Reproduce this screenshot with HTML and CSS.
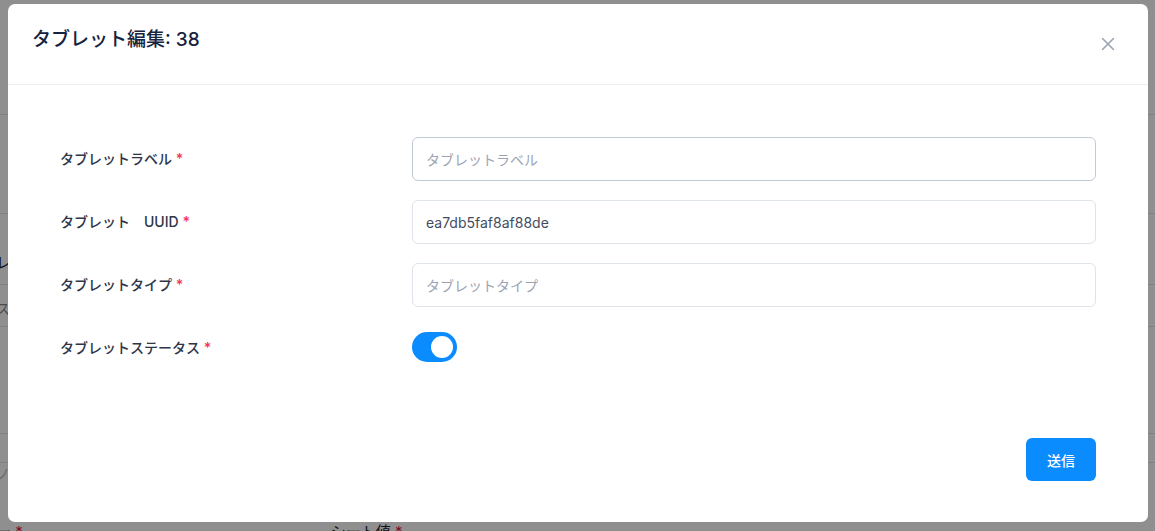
FILE: index.html
```html
<!DOCTYPE html>
<html lang="ja">
<head>
<meta charset="utf-8">
<title>タブレット編集</title>
<link rel="stylesheet" href="styles.css">
</head>
<body>
<div class="page">
  <div class="pg-row r1"></div>
  <div class="pg-row r2"></div>
  <div class="pg-row r3"><span class="pg-text dark">レーベル</span></div>
  <div class="pg-row r4"><span class="pg-text">スペース</span></div>
  <div class="pg-row r5"></div>
  <div class="pg-row r6"></div>
  <div class="pg-row r7">
    <span class="pg-text light">ノ</span>
    <div class="pg-bottom">
      <span class="pg-text dark">ー <em>*</em></span>
      <span class="pg-text dark second">シート値 <em>*</em></span>
    </div>
  </div>
</div>
<div class="overlay"></div>

<div class="modal">
  <header class="modal-header">
    <h1 class="modal-title">タブレット編集: 38</h1>
    <button class="close" aria-label="close">
      <svg width="14" height="14" viewBox="0 0 14 14"><path d="M1.5 1.5 L12.5 12.5 M12.5 1.5 L1.5 12.5" stroke="#9aa3b5" stroke-width="1.6" stroke-linecap="round" fill="none"/></svg>
    </button>
  </header>
  <form class="modal-body">
    <label class="label">タブレットラベル <span class="req">*</span></label>
    <input class="input focus" placeholder="タブレットラベル">
    <label class="label">タブレット　UUID <span class="req">*</span></label>
    <input class="input" value="ea7db5faf8af88de">
    <label class="label">タブレットタイプ <span class="req">*</span></label>
    <input class="input" placeholder="タブレットタイプ">
    <label class="label">タブレットステータス <span class="req">*</span></label>
    <div class="toggle-cell"><span class="toggle"><span class="knob"></span></span></div>
  </form>
  <footer class="modal-footer">
    <button class="submit">送信</button>
  </footer>
</div>
</body>
</html>
```

FILE: styles.css
```css
* { box-sizing: border-box; }
html, body { margin: 0; padding: 0; }
body {
  width: 1155px;
  height: 531px;
  overflow: hidden;
  position: relative;
  background: #fff;
  font-family: "Inter", "Noto Sans CJK JP", sans-serif;
}
.page { display: flex; flex-direction: column; }
.pg-row { border-bottom: 1px solid #e6e6e6; position: relative; display: flex; align-items: flex-end; }
.r1 { height: 115px; }
.r2 { height: 99px; }
.r3 { height: 71px; padding-bottom: 11px; }
.r4 { height: 42px; padding-bottom: 7px; }
.r5 { height: 107px; }
.r6 { height: 29px; }
.r7 { height: 69px; border-bottom: none; flex-direction: column; align-items: flex-start; padding-top: 1px; }
.pg-bottom { margin-top: auto; margin-bottom: -10px; display: flex; }
.pg-text { font-size: 14px; color: #888; margin-left: -4px; white-space: nowrap; line-height: 20px; }
.pg-text.dark { color: #1c2333; font-size: 15px; }
.pg-text.light { color: #bbb; }
.pg-text em { font-style: normal; color: #e0184c; }
.pg-text.second { margin-left: 308px; }

.overlay {
  position: absolute;
  inset: 0;
  background: rgba(0, 0, 0, 0.44);
}

.modal {
  position: absolute;
  left: 8px;
  top: 4px;
  width: 1140px;
  height: 518px;
  background: #fff;
  border-radius: 7px;
  display: flex;
  flex-direction: column;
}
.modal-header {
  height: 81px;
  border-bottom: 1px solid #eceef2;
  padding: 21px 24px 0;
  position: relative;
}
.modal-title {
  margin: 0;
  font-size: 19px;
  line-height: 30px;
  font-weight: 500;
  color: #16233f;
}
.close {
  position: absolute;
  right: 33px;
  top: 33px;
  width: 14px;
  height: 14px;
  padding: 0;
  border: none;
  background: none;
  display: flex;
}
.modal-body {
  display: grid;
  grid-template-columns: 352px 1fr;
  grid-auto-rows: 44px;
  row-gap: 19px;
  align-items: center;
  padding: 52px 52px 0;
  margin: 0;
}
.label {
  font-size: 14px;
  font-weight: 500;
  color: #2e3648;
  line-height: 20px;
}
.req { color: #f5365c; font-weight: 600; }
.input {
  height: 44px;
  width: 100%;
  border: 1px solid #dfe3ea;
  border-radius: 6px;
  padding: 0 13px;
  font-family: "Inter", "Noto Sans CJK JP", sans-serif;
  font-size: 14px;
  color: #434d62;
  outline: none;
  background: #fff;
}
.input.focus { border-color: #c3cad7; }
.input::placeholder { color: #9ca4b3; }
.toggle-cell { display: flex; align-items: center; padding-bottom: 3px; }
.toggle {
  width: 45px;
  height: 30px;
  border-radius: 15px;
  background: #0a8cff;
  display: flex;
  align-items: center;
  justify-content: flex-end;
  padding-right: 4px;
}
.knob {
  width: 22px;
  height: 22px;
  border-radius: 50%;
  background: #fff;
}
.modal-footer {
  margin-top: auto;
  display: flex;
  justify-content: flex-end;
  padding: 0 52px 41px;
}
.submit {
  width: 70px;
  height: 43px;
  border: none;
  border-radius: 6px;
  background: #0a8cff;
  color: #fff;
  font-family: "Inter", "Noto Sans CJK JP", sans-serif;
  font-size: 14px;
  font-weight: 500;
}
```
